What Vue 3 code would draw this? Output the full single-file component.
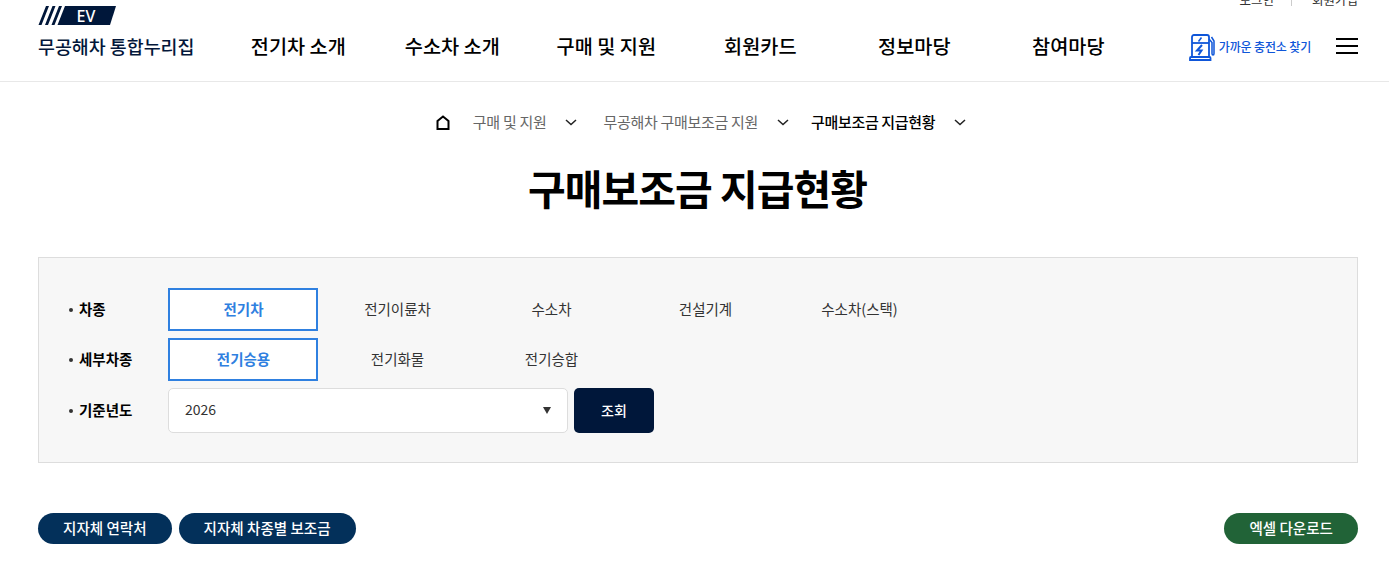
<template>
  <div class="page">
    <header class="site-header">
      <div class="util">
        <a>로그인</a>
        <i></i>
        <a>회원가입</a>
      </div>
      <div class="header-main">
        <div class="brand">
          <svg class="logo" width="78" height="25" viewBox="0 -6 78 25">
            <path d="M0.5 19 L8 0 H11 L3.5 19Z M7 19 L14.5 0 H17.5 L10 19Z M13.5 19 L21 0 H24 L16.5 19Z" fill="#00173a" />
            <path d="M19.5 19 L27 0 H78 L72 19Z" fill="#00173a" />
            <text x="38.5" y="16" class="logo-text">EV</text>
          </svg>
          <div class="brand-name">무공해차 통합누리집</div>
        </div>
        <nav class="gnb">
          <a v-for="item in menus" :key="item">{{ item }}</a>
        </nav>
        <a class="near">
          <svg width="26" height="28" viewBox="0 0 26 28" fill="none" stroke="#0f56d9" stroke-width="1.8">
            <path d="M3 24V4C3 3 3.8 2 5 2H18C19 2 20 3 20 4V24" />
            <path d="M3 10H20" />
            <path d="M1 27V25C1 24.5 1.5 24 2 24H20.5C21 24 21.5 24.5 21.5 25V27Z" />
            <path d="M20 6L23 9.5V20.5C23 22.5 25 22.5 25 20.5V8L22.5 4" stroke-width="1.5" />
            <path d="M12.5 4.5L9.5 8.5" stroke-width="1.5" />
            <path d="M13 12L8 17.5H12.5L9.5 22" stroke-width="2" />
          </svg>
          <span>가까운 충전소 찾기</span>
        </a>
        <button class="menu-btn" aria-label="전체메뉴"><i></i><i></i><i></i></button>
      </div>
    </header>

    <div class="breadcrumb">
      <svg class="home" width="14" height="15" viewBox="0 0 14 15" fill="none" stroke="#000" stroke-width="2">
        <path d="M1.5 14V6L7 1.5L12.5 6V14Z" />
      </svg>
      <div v-for="c in crumbs" :key="c.name" class="crumb" :class="c.cls">
        <span>{{ c.name }}</span>
        <svg width="12" height="7" viewBox="0 0 12 7" fill="none" stroke="#222" stroke-width="1.5">
          <path d="M1 1L6 5.5L11 1" />
        </svg>
      </div>
    </div>

    <h1 class="page-title">구매보조금 지급현황</h1>

    <section class="search-box">
      <div class="row">
        <div class="label">차종</div>
        <div class="options">
          <button v-for="(o, i) in carTypes" :key="o" class="opt" :class="{ on: i === 0 }">{{ o }}</button>
        </div>
      </div>
      <div class="row">
        <div class="label">세부차종</div>
        <div class="options">
          <button v-for="(o, i) in subTypes" :key="o" class="opt" :class="{ on: i === 0 }">{{ o }}</button>
        </div>
      </div>
      <div class="row year">
        <div class="label">기준년도</div>
        <div class="select">
          <span>2026</span>
          <em></em>
        </div>
        <button class="search-btn">조회</button>
      </div>
    </section>

    <div class="actions">
      <div class="left">
        <button class="pill navy">지자체 연락처</button>
        <button class="pill navy">지자체 차종별 보조금</button>
      </div>
      <button class="pill green">엑셀 다운로드</button>
    </div>
  </div>
</template>

<script setup>
const menus = ['전기차 소개', '수소차 소개', '구매 및 지원', '회원카드', '정보마당', '참여마당']

const crumbs = [
  { name: '구매 및 지원', cls: 'first' },
  { name: '무공해차 구매보조금 지원', cls: 'mid' },
  { name: '구매보조금 지급현황', cls: 'now' }
]

const carTypes = ['전기차', '전기이륜차', '수소차', '건설기계', '수소차(스택)']
const subTypes = ['전기승용', '전기화물', '전기승합']
</script>

<style>
html, body {
  margin: 0;
  overflow: hidden;
  background: #fff;
}
</style>

<style scoped>
.page {
  width: 1389px;
  height: 573px;
  overflow: hidden;
  font-family: "Noto Sans CJK KR", "Noto Sans", sans-serif;
  color: #000;
}

button {
  font-family: inherit;
  cursor: pointer;
}

.site-header {
  height: 81px;
  border-bottom: 1px solid #e8e8e8;
  padding: 0 31px 0 38px;
  position: relative;
}

.util {
  position: absolute;
  top: -9px;
  right: 31px;
  display: flex;
  align-items: center;
  gap: 17px;
  font-size: 12.5px;
  line-height: 18px;
  color: #333;
}

.util i {
  width: 1px;
  height: 12px;
  margin-right: 3px;
  background: #ccc;
}

.header-main {
  display: flex;
  align-items: flex-start;
}

.brand {
  width: 183.5px;
  padding-top: 0;
}

.logo {
  display: block;
}

.logo-text {
  font-family: "Noto Sans", sans-serif;
  font-size: 16px;
  font-weight: 500;
  fill: #fff;
}

.brand-name {
  margin-top: 8px;
  font-size: 18.4px;
  line-height: 26px;
  font-weight: 500;
  color: #03173a;
  white-space: nowrap;
}

.gnb {
  display: flex;
  padding-top: 31px;
}

.gnb a {
  width: 154px;
  text-align: center;
  font-size: 19.7px;
  line-height: 30px;
  font-weight: 500;
  white-space: nowrap;
}

.near {
  display: flex;
  align-items: center;
  gap: 3px;
  margin-left: 43.5px;
  padding-top: 33px;
  color: #0f56d9;
  font-size: 12px;
  font-weight: 500;
  line-height: 28px;
  letter-spacing: -0.15px;
  white-space: nowrap;
}

.near svg {
  margin-right: 1px;
}

.menu-btn {
  margin-left: 25px;
  margin-top: 38px;
  padding: 0;
  border: 0;
  background: none;
  width: 22px;
  height: 16px;
  display: flex;
  flex-direction: column;
  justify-content: space-between;
}

.menu-btn i {
  display: block;
  height: 2px;
  background: #000;
}

.breadcrumb {
  display: flex;
  align-items: center;
  justify-content: center;
  height: 20px;
  margin-top: 30px;
  padding-left: 13px;
}

.home {
  margin-right: 23px;
}

.crumb {
  display: flex;
  align-items: center;
  gap: 19px;
  font-size: 15px;
  letter-spacing: -0.3px;
  color: #666;
  white-space: nowrap;
}

.crumb span {
  margin-top: -2px;
}

.crumb.first {
  margin-right: 26px;
}

.crumb.mid {
  margin-right: 22px;
}

.crumb.now {
  gap: 19px;
  color: #000;
  font-weight: 500;
  letter-spacing: -0.35px;
}

.page-title {
  margin: 25px 0 0;
  padding-left: 6px;
  text-align: center;
  font-size: 41px;
  line-height: 60px;
  font-weight: 700;
  letter-spacing: -1px;
}

.search-box {
  margin: 40px 31px 0 38px;
  height: 206px;
  box-sizing: border-box;
  background: #f7f7f7;
  border: 1px solid #ddd;
  padding: 30px 29px;
  display: flex;
  flex-direction: column;
  gap: 7px;
}

.row {
  display: flex;
  align-items: center;
}

.label {
  width: 100px;
  padding: 0 0 2px 11px;
  box-sizing: border-box;
  position: relative;
  font-size: 14.5px;
  font-weight: 700;
}

.label::before {
  content: "";
  position: absolute;
  left: 1px;
  top: 50%;
  margin-top: -2px;
  width: 4px;
  height: 4px;
  border-radius: 50%;
  background: #333;
}

.options {
  display: flex;
  gap: 4px;
}

.opt {
  width: 150px;
  height: 43px;
  padding: 0 0 2px 1px;
  background: none;
  border: 2px solid transparent;
  font-size: 14.5px;
  color: #333;
}

.opt.on {
  border-color: #2f80e0;
  color: #2f80e0;
  font-weight: 700;
  background: #fff;
}

.select {
  width: 400px;
  height: 45px;
  box-sizing: border-box;
  border: 1px solid #ddd;
  border-radius: 5px;
  background: #fff;
  padding: 0 16px 3px;
  display: flex;
  align-items: center;
  justify-content: space-between;
  font-size: 14px;
  color: #333;
}

.select em {
  width: 0;
  height: 0;
  margin-top: 3px;
  border-left: 4.5px solid transparent;
  border-right: 4.5px solid transparent;
  border-top: 7px solid #333;
}

.search-btn {
  margin-left: 6px;
  width: 80px;
  height: 45px;
  padding: 0 0 2px;
  border: 0;
  border-radius: 5px;
  background: #00173a;
  color: #fff;
  font-size: 14px;
  font-weight: 500;
}

.actions {
  display: flex;
  justify-content: space-between;
  margin: 50px 31px 0 38px;
}

.left {
  display: flex;
  gap: 7px;
}

.pill {
  height: 31px;
  padding: 0 25px 2px;
  border: 0;
  border-radius: 16px;
  color: #fff;
  font-size: 14.55px;
  font-weight: 500;
  white-space: nowrap;
}

.navy {
  background: #03305a;
}

.green {
  background: #216337;
}
</style>
